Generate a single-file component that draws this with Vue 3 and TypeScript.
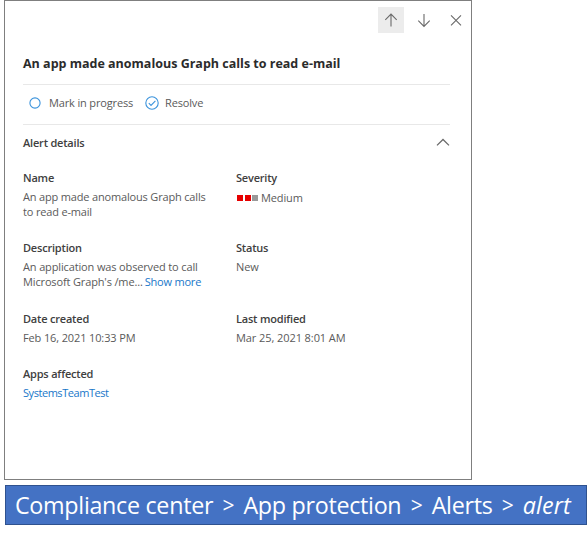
<script setup lang="ts">
interface Field {
  id: string
  label: string
  lines: string[]
  severity?: boolean
  more?: boolean
  link?: boolean
}

const fields: Field[] = [
  { id: 'name', label: 'Name', lines: ['An app made anomalous Graph calls', 'to read e-mail'] },
  { id: 'severity', label: 'Severity', lines: ['Medium'], severity: true },
  { id: 'description', label: 'Description', lines: ['An application was observed to call', "Microsoft Graph's /me..."], more: true },
  { id: 'status', label: 'Status', lines: ['New'] },
  { id: 'created', label: 'Date created', lines: ['Feb 16, 2021 10:33 PM'] },
  { id: 'modified', label: 'Last modified', lines: ['Mar 25, 2021 8:01 AM'] },
  { id: 'apps', label: 'Apps affected', lines: ['SystemsTeamTest'], link: true },
]

const crumbs: string[] = ['Compliance center', 'App protection', 'Alerts']
</script>

<template>
  <main class="page">
    <section class="panel">
      <nav class="toolbar">
        <button class="tool active" aria-label="Previous">
          <svg width="26" height="26" viewBox="0 0 26 26"><path d="M13 19.5V7.2M7.3 12.8L13 7.1L18.7 12.8" /></svg>
        </button>
        <button class="tool" aria-label="Next">
          <svg width="26" height="26" viewBox="0 0 26 26"><path d="M13 7V19.3M7.3 13.7L13 19.4L18.7 13.7" /></svg>
        </button>
        <button class="tool close" aria-label="Close">
          <svg width="26" height="26" viewBox="0 0 26 26"><path d="M8 8.3L18 18.3M18 8.3L8 18.3" /></svg>
        </button>
      </nav>
      <h1 class="title">An app made anomalous Graph calls to read e-mail</h1>
      <div class="actions">
        <button class="action progress">
          <svg width="12" height="12" viewBox="0 0 12 12"><circle cx="6" cy="6" r="5.1" /></svg>
          <span>Mark in progress</span>
        </button>
        <button class="action resolve">
          <svg width="14" height="14" viewBox="0 0 14 14"><circle cx="7" cy="7" r="6.2" /><path d="M3.8 7.2L6 9.4L10.4 4.9" /></svg>
          <span>Resolve</span>
        </button>
      </div>
      <div class="section-head">
        <h2>Alert details</h2>
        <svg width="14" height="9" viewBox="0 0 14 9"><path d="M1 7.4L7 1.5L13 7.4" /></svg>
      </div>
      <dl class="details">
        <div v-for="field in fields" :key="field.id" class="field" :class="field.id">
          <dt>{{ field.label }}</dt>
          <dd v-for="(line, i) in field.lines" :key="i">
            <span v-if="field.severity" class="meter"><i /><i /><i class="off" /></span>
            <a v-if="field.link">{{ line }}</a>
            <span v-else class="value">{{ line }}</span>
            <a v-if="field.more && i === field.lines.length - 1" class="more">Show more</a>
          </dd>
        </div>
      </dl>
    </section>
    <footer class="banner">
      <template v-for="crumb in crumbs" :key="crumb">
        <span>{{ crumb }}</span><span class="sep">&gt;</span>
      </template>
      <em>alert</em>
    </footer>
  </main>
</template>

<style>
body {
  background: #fff;
}
</style>

<style scoped>
.page {
  box-sizing: border-box;
  width: 587px;
  height: 533px;
  padding-left: 4px;
  overflow: hidden;
  font-family: "Open Sans", "Noto Sans", sans-serif;
  font-size: 11px;
  color: #5a5a5a;
  white-space: nowrap;
}
.panel {
  box-sizing: border-box;
  width: 468px;
  height: 480px;
  border: 1px solid #7f7f7f;
  padding: 6px 21px 0 18px;
}
svg {
  display: block;
  flex: none;
  fill: none;
  stroke: #6a6a6a;
  stroke-width: 1.1;
}
button {
  border: 0;
  margin: 0;
  padding: 0;
  background: none;
  font: inherit;
  letter-spacing: inherit;
  color: inherit;
}
.toolbar {
  display: flex;
  justify-content: flex-end;
  gap: 7px;
  margin-right: -19px;
  height: 26px;
}
.tool {
  flex: none;
  width: 26px;
  height: 26px;
}
.active {
  background: #ececec;
}
.close {
  margin-left: -1px;
}
.title {
  margin: 21px 0 0;
  height: 30px;
  line-height: 20px;
  font-size: 12.5px;
  font-weight: 700;
  color: #2b2b2b;
}
.actions {
  box-sizing: border-box;
  display: flex;
  align-items: center;
  height: 41px;
  padding: 0 0 3px 6px;
  border-top: 1px solid #e8e8e8;
  border-bottom: 1px solid #e8e8e8;
  letter-spacing: -0.15px;
}
.action {
  display: flex;
  align-items: center;
  line-height: 16px;
}
.action svg {
  stroke: #3b93dc;
}
.progress {
  gap: 8px;
  width: 116px;
}
.resolve {
  gap: 6px;
}
.section-head {
  display: flex;
  align-items: center;
  justify-content: space-between;
  height: 35px;
}
.section-head svg {
  stroke-width: 1.3;
}
h2, dt {
  margin: 0;
  font-size: 11px;
  font-weight: 600;
  line-height: 16px;
  letter-spacing: -0.2px;
  color: #404040;
}
.details {
  display: grid;
  grid-template-columns: 213px 1fr;
  grid-template-rows: 70px 71px 55px auto;
  margin: 10px 0 0;
}
dt {
  margin-bottom: 3px;
}
dd {
  display: flex;
  align-items: center;
  margin: 0;
  line-height: 15px;
  letter-spacing: -0.13px;
}
.name dd {
  letter-spacing: -0.17px;
}
.modified dd {
  letter-spacing: -0.08px;
}
.severity dd {
  margin-top: 4px;
}
.apps dd {
  letter-spacing: -0.45px;
}
a {
  color: #1877c9;
}
.more {
  margin-left: 2px;
  letter-spacing: -0.2px;
}
.description .value {
  letter-spacing: -0.14px;
}
.meter {
  display: flex;
  gap: 1.5px;
  margin: 0 3px 0 1px;
}
.meter i {
  width: 6px;
  height: 6px;
  background: #e60000;
}
.meter .off {
  background: #999;
}
.banner {
  box-sizing: border-box;
  display: flex;
  align-items: center;
  width: 582px;
  height: 40px;
  margin: 5px 0 0 1px;
  padding: 0 0 1px 9px;
  border: 1px solid #2f528f;
  background: #4472c4;
  color: #fff;
  font-size: 23.3px;
  letter-spacing: -0.3px;
}
.sep {
  width: 30.3px;
  font-size: 21px;
  text-align: center;
}
.banner em {
  letter-spacing: 0.1px;
}
</style>
